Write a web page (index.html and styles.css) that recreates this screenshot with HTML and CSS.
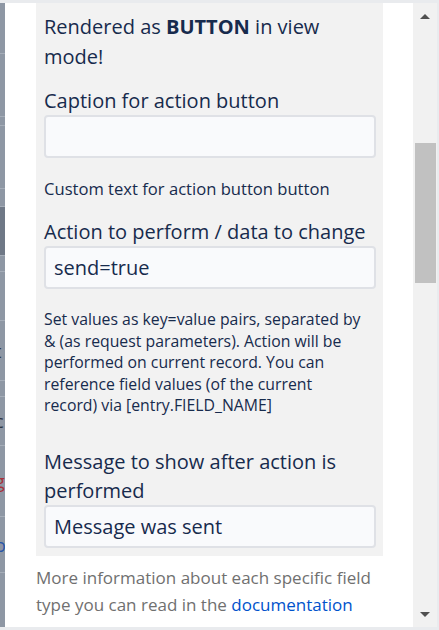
FILE: index.html
```html
<!DOCTYPE html>
<html>
<head>
<meta charset="utf-8">
<link rel="stylesheet" href="styles.css">
</head>
<body>
<div class="frame">
  <div class="backdrop">
    <div class="bd-row" style="height:50px"><span class="g">i</span></div>
    <div class="bd-row" style="height:62px"><span class="g g-low">:</span></div>
    <div class="bd-row" style="height:8px"></div>
    <div class="bd-row" style="height:62px"><span class="g">:</span></div>
    <div class="bd-row" style="height:17px"></div>
    <div class="bd-row bd-dark" style="height:48px"><span class="g">:</span></div>
    <div class="bd-row" style="height:15px"></div>
    <div class="bd-row" style="height:48px"><span class="g">:</span></div>
    <div class="bd-row" style="height:59px"><span class="g">t</span></div>
    <div class="bd-row" style="height:15px"></div>
    <div class="bd-row" style="height:48px"><span class="g">c</span></div>
    <div class="bd-row" style="height:70px"><span class="g g-red">g</span></div>
    <div class="bd-row" style="height:55px"><span class="g g-blue">o</span></div>
    <div class="bd-row bd-last"></div>
  </div>
  <div class="panel">
    <div class="box">
      <p class="title">Rendered as <b>BUTTON</b> in view mode!</p>
      <div class="label first">Caption for action button</div>
      <div class="input"></div>
      <p class="help help-gap">Custom text for action button button</p>
      <div class="label">Action to perform / data to change</div>
      <div class="input">send=true</div>
      <p class="help help-gap help-long">Set values as key=value pairs, separated by<br>&amp; (as request parameters). Action will be<br>performed on current record. You can<br>reference field values (of the current<br>record) via [entry.FIELD_NAME]</p>
      <div class="label msg">Message to show after action is performed</div>
      <div class="input">Message was sent</div>
    </div>
    <p class="more">More information about each specific field type you can read in the <a href="#">documentation</a></p>
  </div>
  <div class="scrollbar">
    <div class="arrow up"></div>
    <div class="track"><div class="thumb"></div></div>
    <div class="arrow down"></div>
  </div>
</div>
</body>
</html>
```

FILE: styles.css
```css
html, body {
  margin: 0;
  padding: 0;
}
body {
  background: #e9ebee;
  width: 439px;
  height: 630px;
  overflow: hidden;
  font-family: "Open Sans", "Noto Sans", sans-serif;
  color: #172b4d;
}
.frame {
  display: flex;
  height: 624px;
  margin-top: 3px;
  margin-right: 2px;
}
.backdrop {
  width: 5px;
  background: #8e97a4;
  overflow: hidden;
  display: flex;
  flex-direction: column;
}
.bd-row {
  flex: none;
  border-bottom: 1px solid #a5adb8;
  display: flex;
  align-items: center;
  overflow: hidden;
}
.bd-dark {
  background: #6f7886;
}
.bd-last {
  flex: 1;
  border-bottom: none;
}
.g {
  font-size: 18px;
  line-height: 20px;
  color: #2e3644;
  margin-left: -5px;
}
.g-red { color: #a8323a; }
.g-blue { color: #2a55a8; }
.panel {
  flex: 1;
  background: #ffffff;
  padding: 0 30px 0 31px;
  overflow: hidden;
}
.box {
  background: #f2f2f2;
  padding: 9px 7px 8px 8px;
}
.title {
  margin: 0;
  font-size: 20px;
  line-height: 30px;
}
.title b {
  font-weight: 700;
}
.label {
  font-size: 20px;
  line-height: 29px;
  margin-top: 18px;
}
.label.first {
  margin-top: 14px;
}
.label.msg {
  margin-top: 30px;
}
.input {
  height: 39px;
  border: 2px solid #dfe1e6;
  border-radius: 4px;
  background: #f9fafc;
  padding: 0 8px;
  font-size: 20px;
  line-height: 39px;
  color: #172b4d;
}
.help {
  margin: 0 -6px 0 0;
  font-size: 16.6px;
  line-height: 21px;
  white-space: nowrap;
}
.help-gap {
  margin-top: 20px;
}
.help-long {
  margin-top: 20px;
  line-height: 21.5px;
  font-size: 15.8px;
}
.more {
  margin: 8px 0 0 0;
  font-size: 17px;
  line-height: 27px;
  color: #707070;
}
.more a {
  color: #0052cc;
  text-decoration: none;
}
.scrollbar {
  width: 24px;
  background: #f1f1f1;
  display: flex;
  flex-direction: column;
}
.arrow {
  height: 23px;
  display: flex;
  align-items: center;
  justify-content: center;
}
.arrow.up::before {
  content: "";
  border-left: 5px solid transparent;
  border-right: 5px solid transparent;
  border-bottom: 5px solid #505050;
  margin-top: 3px;
}
.arrow.down::before {
  content: "";
  border-left: 5px solid transparent;
  border-right: 5px solid transparent;
  border-top: 5px solid #505050;
  margin-bottom: 3px;
}
.track {
  flex: 1;
  padding: 117px 1px 0 2px;
}
.thumb {
  height: 140px;
  background: #c1c1c1;
}
```
